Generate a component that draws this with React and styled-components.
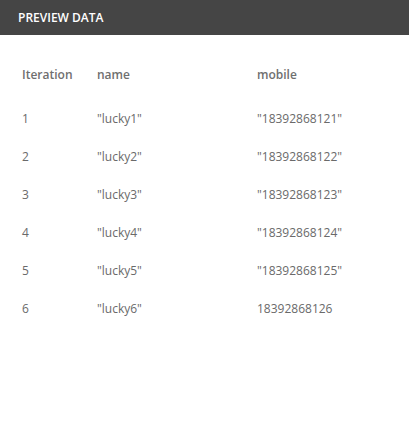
import React from "react";
import styled, { createGlobalStyle } from "styled-components";

const GlobalStyle = createGlobalStyle`
  html, body {
    margin: 0;
    padding: 0;
    background: #fff;
    font-family: "Open Sans", "Liberation Sans", sans-serif;
  }
`;

const Panel = styled.section`
  width: 409px;
  height: 433px;
  background: #fff;
`;

const TitleBar = styled.header`
  height: 35px;
  background: #454545;
  display: flex;
  align-items: center;
  padding: 0 18px;
  color: #fff;
  font-size: 12px;
  font-weight: 600;
`;

const Table = styled.div`
  display: grid;
  grid-template-columns: 75px 160px 1fr;
  padding: 21px 22px 0;
`;

const Cell = styled.div`
  height: 38px;
  line-height: 38px;
  font-size: 12px;
  color: ${p => (p.head ? "#6f6f6f" : "#6a6a6a")};
  font-weight: ${p => (p.head ? 600 : 400)};
  white-space: nowrap;
  margin-bottom: ${p => (p.head ? "6px" : "0")};
`;

const rows = [
  { i: 1, name: '"lucky1"', mobile: '"18392868121"' },
  { i: 2, name: '"lucky2"', mobile: '"18392868122"' },
  { i: 3, name: '"lucky3"', mobile: '"18392868123"' },
  { i: 4, name: '"lucky4"', mobile: '"18392868124"' },
  { i: 5, name: '"lucky5"', mobile: '"18392868125"' },
  { i: 6, name: '"lucky6"', mobile: "18392868126" }
];

export default function App() {
  return (
    <>
      <GlobalStyle />
      <Panel>
        <TitleBar>PREVIEW DATA</TitleBar>
        <Table>
          <Cell head>Iteration</Cell>
          <Cell head>name</Cell>
          <Cell head>mobile</Cell>
          {rows.map(r => (
            <React.Fragment key={r.i}>
              <Cell>{r.i}</Cell>
              <Cell>{r.name}</Cell>
              <Cell>{r.mobile}</Cell>
            </React.Fragment>
          ))}
        </Table>
      </Panel>
    </>
  );
}
